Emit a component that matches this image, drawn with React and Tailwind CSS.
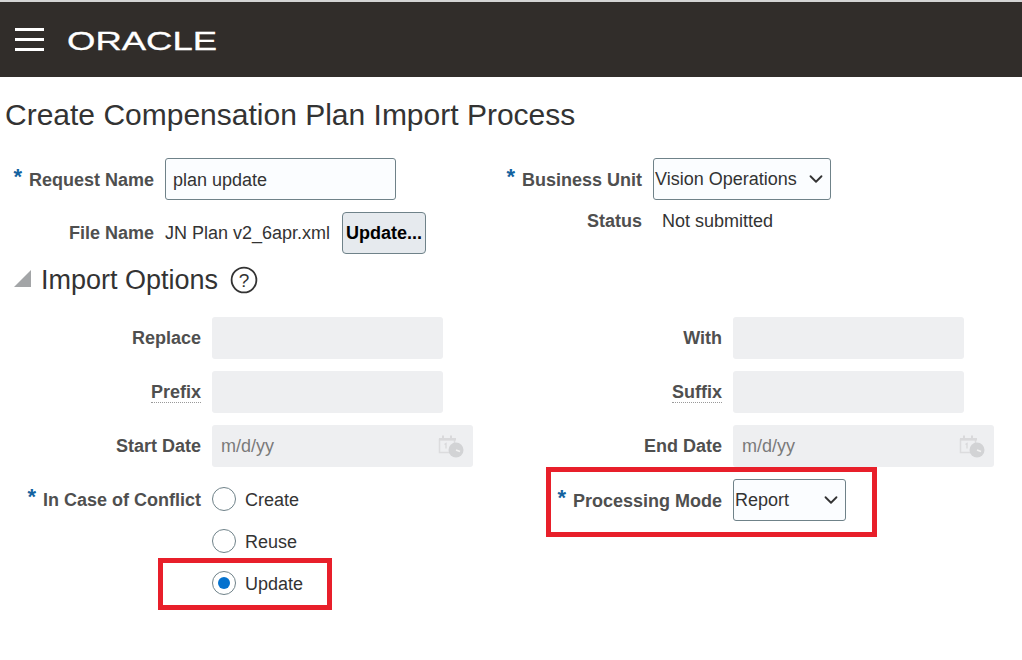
import { ChevronDown } from 'lucide-react'

const FONT = 'font-["Liberation_Sans",Arial,sans-serif]'

function Label({ children, required, width = 'w-[201px]', dotted }) {
    return (
        <div className={`${width} ${required ? 'pt-[2px]' : ''} shrink-0 flex justify-end items-center text-[18px] font-bold text-[#4f4f4f] whitespace-nowrap`}>
            {required && <span className="text-[22px] leading-none text-[#13629f] mr-[7px] -mt-[7px]">*</span>}
            <span className={dotted ? 'border-b border-dotted border-[#999] pt-[1px] leading-[20px]' : ''}>{children}</span>
        </div>
    )
}

function DisabledInput({ date }) {
    return (
        <div className={`${date ? 'w-[261px]' : 'w-[231px]'} h-[42px] rounded-[3px] bg-[#eeeff1] flex items-center justify-between pl-[9px] pr-[9px] text-[18px] text-[#7a7a7a]`}>
            {date && <span>m/d/yy</span>}
            {date && <CalendarIcon />}
        </div>
    )
}

function CalendarIcon() {
    return (
        <svg width="26" height="24" viewBox="0 0 26 24" fill="none">
            <path d="M1.5 5.5h15v13h-15z" stroke="#dcdcde" strokeWidth="1.5" />
            <path d="M5 1.5v4M13 1.5v4" stroke="#d9d9db" strokeWidth="2" />
            <path d="M1 4h17v2.5H1z" fill="#d9d9db" />
            <path d="M6.5 10.5l1.5-1v5" stroke="#d9d9db" strokeWidth="1.3" />
            <circle cx="18" cy="16" r="7.5" fill="#d2d3d5" />
            <path d="M18 16l4 1.5" stroke="#f2f2f2" strokeWidth="1.5" />
        </svg>
    )
}

function Select({ value, width }) {
    return (
        <div className={`${width} h-[42px] pl-[1px] pr-[3px] rounded-[3px] border border-[#6f8289] bg-[#fbfdff] flex items-center justify-between text-[18px] text-[#333]`}>
            <span className="whitespace-nowrap">{value}</span>
            <ChevronDown size={22} strokeWidth={2} className="text-[#333] shrink-0" />
        </div>
    )
}

function Radio({ label, checked }) {
    return (
        <div className="h-[42px] flex items-center gap-[9px]">
            <span className="w-[24px] h-[24px] rounded-full border border-[#6f8289] bg-white flex items-center justify-center">
                {checked && <span className="w-[12px] h-[12px] rounded-full bg-[#0572ce]" />}
            </span>
            <span className="text-[18px] text-[#333] pt-[2px]">{label}</span>
        </div>
    )
}

function OptionRow({ label, dotted, date }) {
    return (
        <div className="flex gap-[11px] h-[42px]">
            <Label dotted={dotted}>{label}</Label>
            <DisabledInput date={date} />
        </div>
    )
}

export default function App() {
    return (
        <div className={`${FONT} relative w-[1022px] h-[660px] overflow-hidden bg-white text-[#333]`}>
            <div className="h-[2px] bg-[#d4d4d4]" />
            <header className="h-[75px] bg-[#312d2a] flex items-center pl-[15px]">
                <div className="w-[29px] flex flex-col gap-[7px]">
                    <span className="block h-[3px] bg-white" />
                    <span className="block h-[3px] bg-white" />
                    <span className="block h-[3px] bg-white" />
                </div>
                <div className="ml-[23px] pt-[3px] text-[25px] leading-none text-white origin-left scale-x-[1.46] [-webkit-text-stroke:0.3px_white]">ORACLE</div>
            </header>

            <h1 className="mt-[21px] ml-[5px] text-[30px] leading-[34px] font-normal text-[#333]">Create Compensation Plan Import Process</h1>

            <div className="mt-[26px] flex">
                <div className="w-[488px] flex flex-col gap-[12px]">
                    <div className="flex gap-[11px] h-[42px]">
                        <Label required width="w-[154px]">Request Name</Label>
                        <div className="w-[231px] rounded-[3px] border border-[#6f8289] bg-[#fbfdff] flex items-center pl-[7px] pt-[2px] text-[18px] text-[#333]">plan update</div>
                    </div>
                    <div className="flex gap-[11px] h-[42px]">
                        <Label width="w-[154px]">File Name</Label>
                        <div className="flex items-center text-[18px] text-[#333] whitespace-nowrap w-[166px]">JN Plan v2_6apr.xml</div>
                        <button className="w-[84px] rounded-[4px] border border-[#6f8289] bg-[#e6eaee] text-[18px] font-bold text-black">Update...</button>
                    </div>
                </div>
                <div className="flex flex-col">
                    <div className="flex gap-[11px] h-[42px]">
                        <Label required width="w-[154px]">Business Unit</Label>
                        <Select value="Vision Operations" width="w-[178px]" />
                    </div>
                    <div className="flex gap-[20px] h-[42px]">
                        <Label width="w-[154px]">Status</Label>
                        <div className="flex items-center text-[18px] text-[#333]">Not submitted</div>
                    </div>
                </div>
            </div>

            <div className="mt-[5px] h-[42px] flex items-center">
                <svg width="18" height="18" viewBox="0 0 18 18" className="ml-[14px] mt-[-3px]">
                    <path d="M17 0v17H0z" fill="#a3a5a7" />
                </svg>
                <span className="ml-[9px] text-[27px] text-[#333]">Import Options</span>
                <svg width="28" height="28" viewBox="0 0 28 28" className="ml-[12px]" fill="none">
                    <circle cx="14" cy="14" r="12.4" stroke="#333" strokeWidth="1.8" />
                    <text x="14" y="20.5" textAnchor="middle" fontSize="19" fill="#333" fontFamily="Liberation Sans">?</text>
                </svg>
            </div>

            <div className="mt-[16px] flex">
                <div className="w-[521px] flex flex-col gap-[12px]">
                    <OptionRow label="Replace" />
                    <OptionRow label="Prefix" dotted />
                    <OptionRow label="Start Date" date />
                    <div className="flex gap-[11px] mt-[-1px]">
                        <div className="h-[42px] flex">
                            <Label required>In Case of Conflict</Label>
                        </div>
                        <div className="flex flex-col">
                            <Radio label="Create" />
                            <Radio label="Reuse" />
                            <Radio label="Update" checked />
                        </div>
                    </div>
                </div>
                <div className="flex flex-col gap-[12px]">
                    <OptionRow label="With" />
                    <OptionRow label="Suffix" dotted />
                    <OptionRow label="End Date" date />
                    <div className="flex gap-[11px] h-[42px]">
                        <Label required>Processing Mode</Label>
                        <Select value="Report" width="w-[113px]" />
                    </div>
                </div>
            </div>

            {/* red annotation boxes drawn over the form */}
            <div className="absolute left-[158px] top-[558px] w-[174px] h-[52px] border-[5px] border-[#e81f2a]" />
            <div className="absolute left-[546px] top-[467px] w-[331px] h-[70px] border-[5px] border-[#e81f2a]" />
        </div>
    )
}
